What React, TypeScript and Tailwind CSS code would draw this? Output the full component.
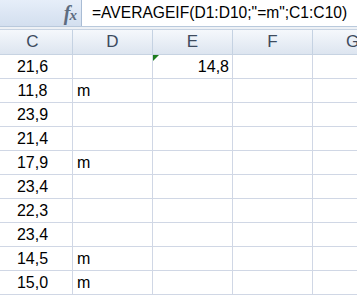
import React from "react"

const rows: { c: string; d: string; e: string }[] = [
  { c: "21,6", d: "", e: "14,8" },
  { c: "11,8", d: "m", e: "" },
  { c: "23,9", d: "", e: "" },
  { c: "21,4", d: "", e: "" },
  { c: "17,9", d: "m", e: "" },
  { c: "23,4", d: "", e: "" },
  { c: "22,3", d: "", e: "" },
  { c: "23,4", d: "", e: "" },
  { c: "14,5", d: "m", e: "" },
  { c: "15,0", d: "m", e: "" },
]

const cols = ["C", "D", "E", "F", "G"]

function FxIcon() {
  return (
    <span className="font-['Liberation_Serif',serif] italic font-bold text-[20px] leading-none text-[#5d6c80] tracking-[-1px]">
      f<span className="text-[15px]">x</span>
    </span>
  )
}

export default function App() {
  return (
    <div className="w-[357px] h-[305px] overflow-hidden bg-white font-['Liberation_Sans',Arial,sans-serif] text-[16px] text-black">
      {/* Formula bar */}
      <div className="flex h-[27px] bg-gradient-to-b from-[#e6eef9] to-[#d3dfef] border-b border-[#b9c9dc]">
        <div className="w-[82px] flex items-center justify-end pr-[5px] border-r border-[#a9bcd4]">
          <FxIcon />
        </div>
        <div className="flex-1 bg-white flex items-center pl-[10px] text-[15.6px] whitespace-nowrap">
          =AVERAGEIF(D1:D10;"=m";C1:C10)
        </div>
      </div>
      <div className="h-[2px] bg-[#eef1f5]" />

      {/* Column headers */}
      <div className="flex -ml-[7px] h-[26px] bg-gradient-to-b from-[#f5f8fc] to-[#dde5f0] border-t border-[#c7d3e2] border-b border-[#9eb6ce]">
        {cols.map((c) => (
          <div
            key={c}
            className="w-[80px] shrink-0 flex items-center justify-center border-r border-[#c5d2e2] text-[#3d4b5e] text-[17px]"
          >
            {c}
          </div>
        ))}
      </div>

      {/* Cells */}
      {rows.map((r, i) => (
        <div key={i} className="flex -ml-[7px] h-[24px] border-b border-[#d0d7e5]">
          <div className="w-[80px] shrink-0 flex items-center justify-center border-r border-[#d0d7e5]">
            {r.c}
          </div>
          <div className="w-[80px] shrink-0 flex items-center pl-[4px] border-r border-[#d0d7e5]">
            {r.d}
          </div>
          <div className="relative w-[80px] shrink-0 flex items-center justify-end pr-[3px] border-r border-[#d0d7e5]">
            {i === 0 && (
              <span className="absolute left-0 top-0 w-0 h-0 border-t-[6px] border-t-[#1e7d1e] border-r-[6px] border-r-transparent" />
            )}
            {r.e}
          </div>
          <div className="w-[80px] shrink-0 border-r border-[#d0d7e5]" />
          <div className="w-[80px] shrink-0 border-r border-[#d0d7e5]" />
        </div>
      ))}
    </div>
  )
}
